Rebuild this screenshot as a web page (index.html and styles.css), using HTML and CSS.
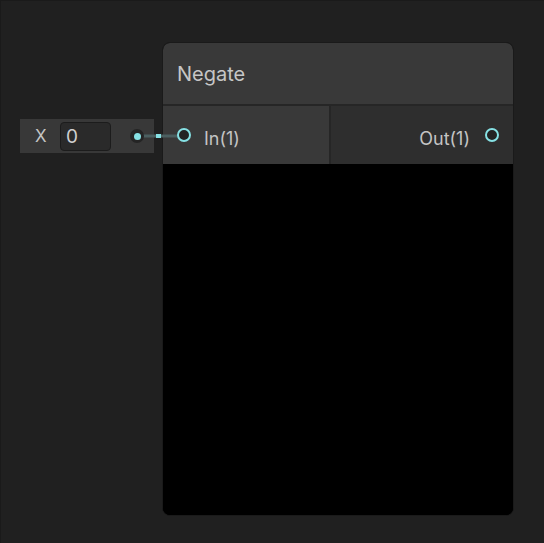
FILE: index.html
```html
<!DOCTYPE html>
<html lang="en">
<head>
<meta charset="utf-8">
<title>Negate</title>
<link rel="stylesheet" href="styles.css">
</head>
<body>
<div class="graph">
  <!-- wire from the inline X field to the node input -->
  <svg class="edges" width="544" height="543" viewBox="0 0 544 543">
    <line x1="137" y1="136" x2="179" y2="136" stroke="#4b5f60" stroke-width="3"/>
    <rect x="156" y="134" width="5" height="4" fill="#86e1e4"/>
  </svg>

  <div class="inline-field">
    <span class="inline-label">X</span>
    <span class="inline-input">0</span>
    <span class="inline-dot"></span>
  </div>

  <div class="node">
    <div class="node-title">Negate</div>
    <div class="node-ports">
      <div class="ports-in">
        <span class="port"></span>
        <span class="port-label">In(1)</span>
      </div>
      <div class="ports-out">
        <span class="port-label">Out(1)</span>
        <span class="port"></span>
      </div>
    </div>
    <div class="node-preview"></div>
  </div>
</div>
</body>
</html>
```

FILE: styles.css
```css
* { box-sizing: border-box; }

html, body {
  margin: 0;
  padding: 0;
  background: #202020;
}

.graph {
  position: relative;
  width: 544px;
  height: 543px;
  background: #202020;
  border-top: 1px solid #1a1a1a;
  border-left: 1px solid #1a1a1a;
  font-family: Inter, "Noto Sans", sans-serif;
  color: #c8c8c8;
  overflow: hidden;
}

.edges {
  position: absolute;
  left: -1px;
  top: -1px;
  z-index: 1;
}

/* inline value field attached to the input port */
.inline-field {
  position: absolute;
  left: 19px;
  top: 118px;
  width: 134px;
  height: 34px;
  background: #383838;
  display: flex;
  align-items: center;
  padding-left: 15px;
}

.inline-label {
  font-size: 17px;
  color: #c4c4c4;
  width: 25px;
}

.inline-input {
  width: 51px;
  height: 29px;
  background: #2a2a2a;
  border: 1px solid #1c1c1c;
  border-radius: 4px;
  font-size: 19px;
  color: #cfcfcf;
  padding-left: 5px;
  line-height: 27px;
}

.inline-dot {
  margin-left: 19px;
  width: 14px;
  height: 14px;
  border-radius: 50%;
  background: #242424;
  display: flex;
  align-items: center;
  justify-content: center;
  position: relative;
  z-index: 2;
}

.inline-dot::after {
  content: "";
  width: 7px;
  height: 7px;
  border-radius: 50%;
  background: #86e1e4;
}

/* the node card */
.node {
  position: absolute;
  left: 161px;
  top: 41px;
  width: 352px;
  height: 474px;
  border: 1px solid #1a1a1a;
  border-radius: 8px;
  overflow: hidden;
  display: flex;
  flex-direction: column;
  background: #000;
}

.node-title {
  height: 63px;
  flex: none;
  background: #393939;
  border-bottom: 2px solid #262626;
  display: flex;
  align-items: center;
  padding-left: 14px;
  font-size: 20px;
  color: #c6c6c6;
}

.node-ports {
  height: 58px;
  flex: none;
  display: flex;
}

.ports-in {
  width: 168px;
  background: #393939;
  border-right: 2px solid #262626;
  display: flex;
  align-items: center;
  padding-left: 14px;
  gap: 13px;
}

.ports-out {
  flex: 1;
  background: #2e2e2e;
  display: flex;
  align-items: center;
  justify-content: flex-end;
  padding-right: 14px;
  gap: 15px;
}

.port {
  width: 14px;
  height: 14px;
  border-radius: 50%;
  border: 2px solid #86e1e4;
  background: #232323;
  position: relative;
  z-index: 2;
  margin-top: -1px;
}

.port-label {
  font-size: 18px;
  color: #c4c4c4;
  padding-top: 7px;
}

.node-preview {
  flex: 1;
  background: #000;
}
```
